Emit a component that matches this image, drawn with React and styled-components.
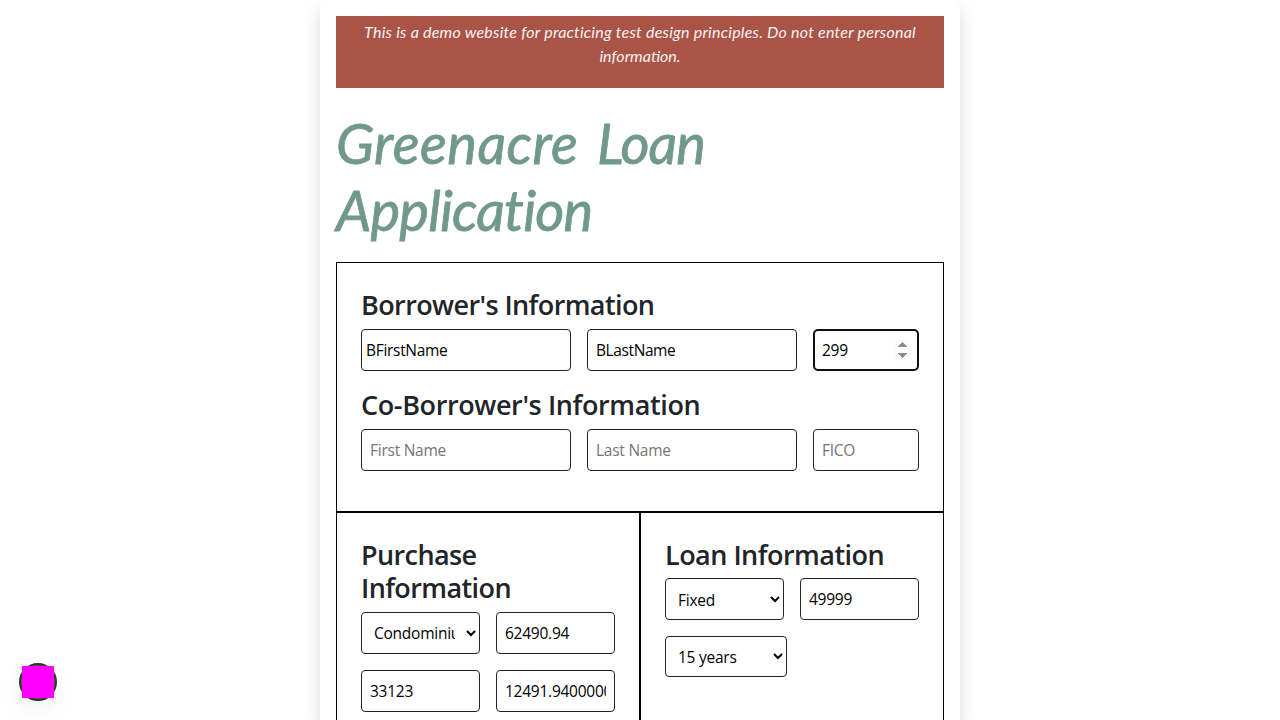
import React from "react";
import styled, { createGlobalStyle } from "styled-components";

const GlobalStyle = createGlobalStyle`
  *, *::before, *::after { box-sizing: border-box; }
  html, body { margin: 0; height: 100%; overflow: hidden; background: #fff; }
  body {
    color: #212529;
    font-family: "Segoe UI", "Open Sans", sans-serif;
    font-size: 16px;
    line-height: 1.5;
  }
`;

const Page = styled.main`
  display: flex;
  flex-direction: column;
  width: 640px;
  height: 720px;
  margin: 0 auto;
  padding: 16px 16px 0;
  border-radius: 6px 6px 0 0;
  background: #fff;
  box-shadow: 0 8px 16px rgba(0, 0, 0, 0.15);
`;

const Banner = styled.div`
  flex: none;
  height: 72px;
  padding-top: 4px;
  background: #aa5347;
  color: #f8f4f4;
  font-family: Lato, sans-serif;
  font-style: italic;
  line-height: 24px;
  text-align: center;
`;

const BannerLine = styled.span`
  display: block;
  white-space: nowrap;
  letter-spacing: ${(p) => p.$spacing};
`;

const Title = styled.h1`
  margin: 21px 0 19px;
  color: #71998b;
  font-family: Lato, sans-serif;
  font-size: 56px;
  font-style: italic;
  font-weight: 400;
  line-height: 67.2px;
  -webkit-text-stroke: 0.8px #71998b;
`;

const TitleLine = styled.span`
  display: block;
  white-space: nowrap;
  letter-spacing: ${(p) => p.$spacing};
  word-spacing: 5px;
`;

const TitleWord = styled.span`
  letter-spacing: ${(p) => p.$spacing};
`;

const Panel = styled.section`
  padding: 24px;
  border: 1px solid #000;
  ${(p) => p.$open && "border-bottom: 0; padding-bottom: 0;"}
`;

const Split = styled.div`
  display: grid;
  flex: 1;
  grid-template-columns: 1fr 1fr;
  min-height: 0;
`;

const Heading = styled.h3`
  margin: 0 0 7px;
  padding-top: 1px;
  font-size: 27px;
  font-weight: 600;
  line-height: 33.6px;
  letter-spacing: ${(p) => p.$spacing || "-0.52px"};
`;

const PersonRow = styled.div`
  display: grid;
  grid-template-columns: 210px 210px 106px;
  gap: 16px;
  margin-bottom: 16px;
`;

const FieldGrid = styled.div`
  display: grid;
  grid-template-columns: 119px 119px;
  gap: 16px;
`;

const Input = styled.input`
  width: 100%;
  min-width: 0;
  height: 42px;
  margin: 0;
  padding: 8px;
  padding-left: ${(p) => (p.$tight ? "4px" : "8px")};
  border: ${(p) => (p.$active ? "2px solid #101010" : "1px solid #212529")};
  ${(p) => p.$active && "padding: 7px;"}
  border-radius: ${(p) => (p.$active ? "5px" : "4px")};
  outline: none;
  background: #fff;
  color: #000;
  font-family: inherit;
  font-size: 15.5px;
  letter-spacing: ${(p) => p.$spacing || "-0.25px"};

  &::placeholder { color: #757575; }
  &::-webkit-inner-spin-button { opacity: ${(p) => (p.$active ? 1 : 0)}; }
`;

const Select = styled.select`
  width: ${(p) => p.$width || "100%"};
  height: ${(p) => p.$height || "42px"};
  margin: 0;
  padding: ${(p) => p.$padding || "8px"};
  border: 1px solid #212529;
  border-radius: 4px;
  background: #fff;
  color: #000;
  font-family: inherit;
  font-size: 15.5px;
  letter-spacing: -0.25px;
`;

const Badge = styled.div`
  position: fixed;
  left: 19px;
  bottom: 19px;
  display: grid;
  place-items: center;
  width: 38px;
  height: 38px;
  border: 2px solid #333;
  border-radius: 50%;
  background: #555;
  box-shadow: 0 8px 24px rgba(0, 0, 0, 0.06);
`;

const BadgeFill = styled.div`
  flex: none;
  width: 32px;
  height: 32px;
  background: #f0f;
`;

export default function App() {
  return (
    <>
      <GlobalStyle />
      <Page>
        <Banner>
          <BannerLine $spacing="0.23px">
            This is a demo website for practicing test design principles. Do not enter personal
          </BannerLine>
          <BannerLine $spacing="0px">information.</BannerLine>
        </Banner>
        <Title>
          <TitleLine $spacing="0.5px">
            Greenacre <TitleWord $spacing="-1px">Loan</TitleWord>
          </TitleLine>
          <TitleLine $spacing="-0.8px">Application</TitleLine>
        </Title>
        <Panel>
          <Heading $spacing="-0.6px">Borrower's Information</Heading>
          <PersonRow>
            <Input $tight $spacing="-0.3px" defaultValue="BFirstName" />
            <Input $spacing="-0.4px" defaultValue="BLastName" />
            <Input $active type="number" defaultValue="299" />
          </PersonRow>
          <Heading $spacing="-0.38px">Co-Borrower's Information</Heading>
          <PersonRow>
            <Input placeholder="First Name" />
            <Input placeholder="Last Name" />
            <Input placeholder="FICO" />
          </PersonRow>
        </Panel>
        <Split>
          <Panel $open>
            <Heading $spacing="-0.6px">Purchase Information</Heading>
            <FieldGrid>
              <Select defaultValue="Condominium">
                <option>Condominium</option>
              </Select>
              <Input defaultValue="62490.94" />
              <Input defaultValue="33123" />
              <Input defaultValue="12491.940000000001" />
            </FieldGrid>
          </Panel>
          <Panel $open>
            <Heading>Loan Information</Heading>
            <FieldGrid>
              <Select $padding="9px 8px 7px" defaultValue="Fixed">
                <option>Fixed</option>
              </Select>
              <Input defaultValue="49999" />
              <Select $width="122px" $height="41px" defaultValue="15 years">
                <option>15 years</option>
              </Select>
            </FieldGrid>
          </Panel>
        </Split>
      </Page>
      <Badge>
        <BadgeFill />
      </Badge>
    </>
  );
}
